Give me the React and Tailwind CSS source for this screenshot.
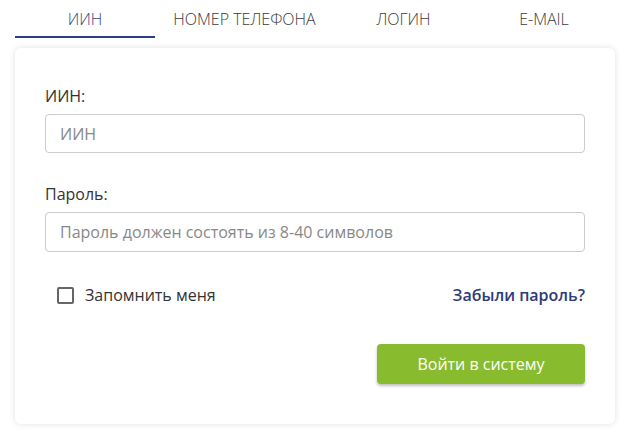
import React, { useState } from 'react';

const tabs = [
    { label: 'ИИН', width: 'w-[140px]' },
    { label: 'НОМЕР ТЕЛЕФОНА', width: 'w-[179px]' },
    { label: 'ЛОГИН', width: 'w-[139px]' },
    { label: 'E-MAIL', width: 'w-[142px]' },
];

const App = () => {
    const [active, setActive] = useState(0);
    const [remember, setRemember] = useState(false);

    return (
        <div className="w-[630px] h-[436px] bg-white font-['Open_Sans',sans-serif] text-[#333]">
            {/* tabs */}
            <div className="flex pl-[15px] h-[38px]">
                {tabs.map((tab, index) => (
                    <button
                        key={index}
                        onClick={() => setActive(index)}
                        className={`${tab.width} h-full pt-[1px] text-[16px] leading-[24px] font-light text-center border-b-2 ${
                            index === active ? 'border-[#2d3c86] text-[#35437f]' : 'border-transparent text-[#3a3a3a]'
                        }`}
                    >
                        {tab.label}
                    </button>
                ))}
            </div>

            {/* card */}
            <div className="mx-[15px] mt-[10px] w-[600px] h-[376px] bg-white rounded-md shadow-[0_0_6px_rgba(0,0,0,0.12)] px-[30px] pt-[37px]">
                <label className="block text-[16px] leading-[22px] text-[#333]">ИИН:</label>
                <input
                    type="text"
                    placeholder="ИИН"
                    className="mt-[7px] w-[540px] h-[39px] border border-[#ccc] rounded-[4px] px-[14px] text-[16px] placeholder:text-[#888] outline-none"
                />

                <label className="block mt-[30px] text-[16px] leading-[22px] text-[#333]">Пароль:</label>
                <input
                    type="password"
                    placeholder="Пароль должен состоять из 8-40 символов"
                    className="mt-[7px] w-[540px] h-[40px] border border-[#ccc] rounded-[4px] px-[14px] text-[16px] placeholder:text-[#888] outline-none"
                />

                <div className="flex items-center justify-between w-[540px] h-[22px] mt-[32px] pl-[12px]">
                    <label className="flex items-center gap-[11px] cursor-pointer">
                        <span
                            onClick={() => setRemember(!remember)}
                            className="w-[17px] h-[17px] border-2 border-[#666] rounded-[2px] bg-white"
                        ></span>
                        <span className="text-[16px] text-[#333]">Запомнить меня</span>
                    </label>
                    <a href="#" className="text-[16px] font-semibold text-[#2d3a7a]">Забыли пароль?</a>
                </div>

                <div className="flex justify-end w-[540px] mt-[38px]">
                    <button className="w-[208px] h-[40px] rounded-[4px] bg-[#88bb2e] text-white text-[16px] shadow-[0_2px_3px_rgba(0,0,0,0.25)]">
                        Войти в систему
                    </button>
                </div>
            </div>
        </div>
    );
};

export default App;
